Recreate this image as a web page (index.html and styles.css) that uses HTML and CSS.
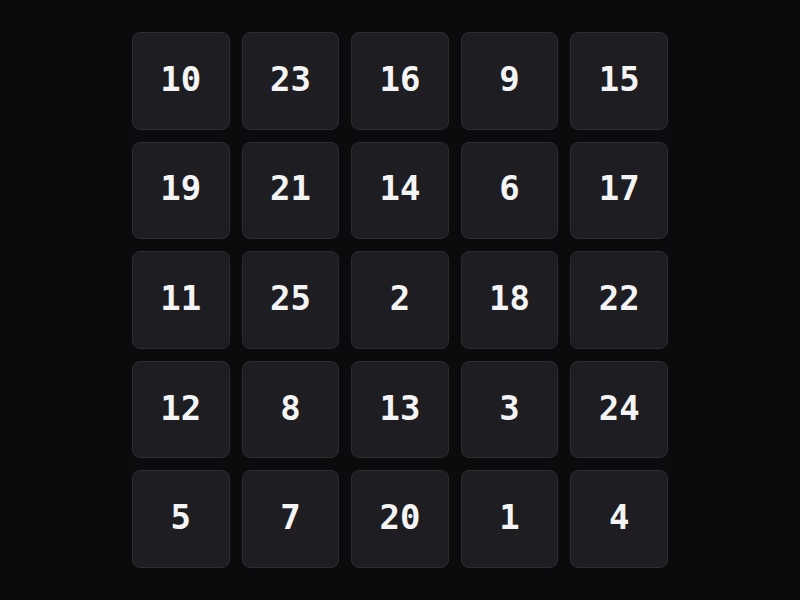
FILE: index.html
```html
<!DOCTYPE html>
<html>
<head>
<meta charset="utf-8">
<link rel="stylesheet" href="styles.css">
</head>
<body>
<div class="board">
  <div class="tile">10</div><div class="tile">23</div><div class="tile">16</div><div class="tile">9</div><div class="tile">15</div>
  <div class="tile">19</div><div class="tile">21</div><div class="tile">14</div><div class="tile">6</div><div class="tile">17</div>
  <div class="tile">11</div><div class="tile">25</div><div class="tile">2</div><div class="tile">18</div><div class="tile">22</div>
  <div class="tile">12</div><div class="tile">8</div><div class="tile">13</div><div class="tile">3</div><div class="tile">24</div>
  <div class="tile">5</div><div class="tile">7</div><div class="tile">20</div><div class="tile">1</div><div class="tile">4</div>
</div>
</body>
</html>
```
FILE: styles.css
```css
html, body {
  margin: 0;
  height: 100%;
  background: #0b0b0d;
}
body {
  display: flex;
  align-items: center;
  justify-content: center;
}
.board {
  width: 536px;
  height: 536px;
  display: grid;
  grid-template-columns: repeat(5, 1fr);
  grid-template-rows: repeat(5, 1fr);
  gap: 12px;
}
.tile {
  background: #1e1e22;
  border: 1px solid #2c2c31;
  border-radius: 8px;
  display: flex;
  align-items: center;
  justify-content: center;
  padding-bottom: 4px;
  color: #f4f4f5;
  font-family: "DejaVu Sans Mono", monospace;
  font-weight: bold;
  font-size: 34px;
}
```
